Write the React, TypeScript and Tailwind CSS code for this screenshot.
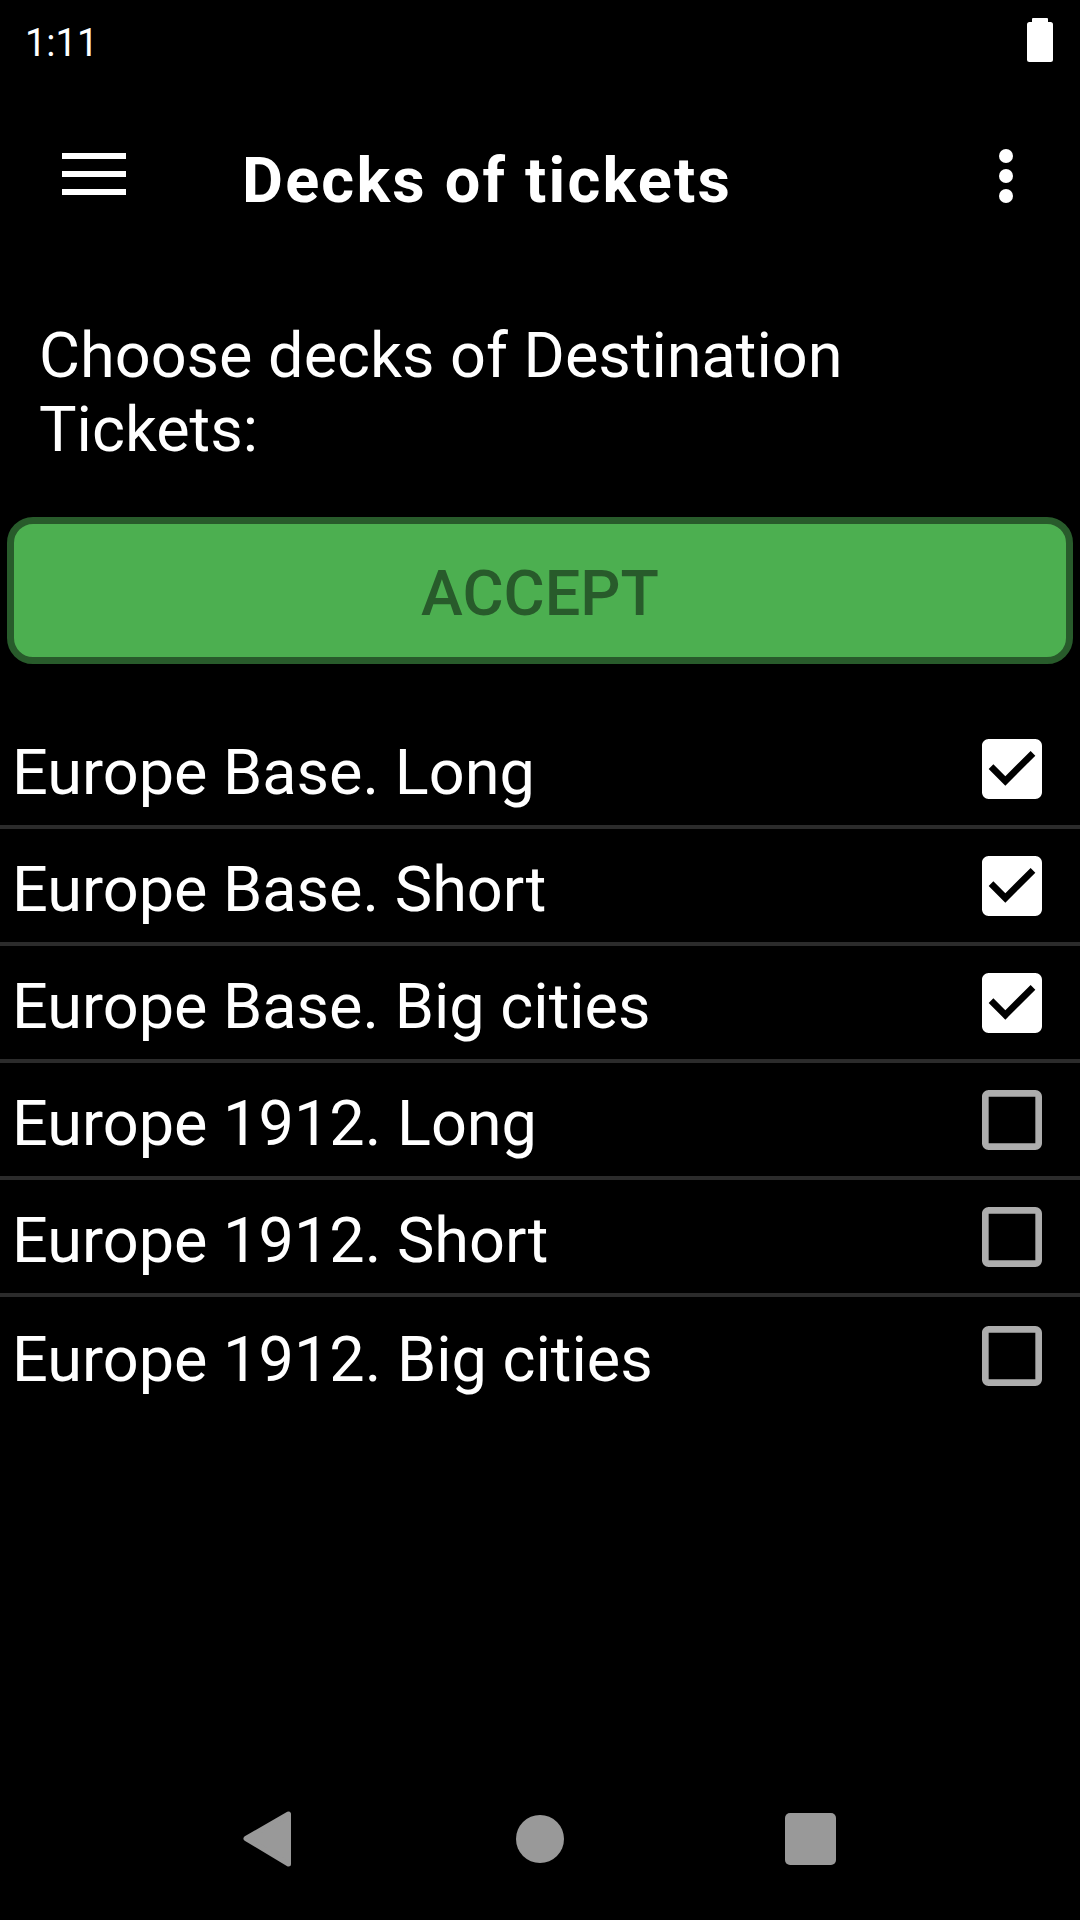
import React, { useState } from "react";

const decks = [
  { name: "Europe Base. Long", checked: true },
  { name: "Europe Base. Short", checked: true },
  { name: "Europe Base. Big cities", checked: true },
  { name: "Europe 1912. Long", checked: false },
  { name: "Europe 1912. Short", checked: false },
  { name: "Europe 1912. Big cities", checked: false },
];

function CheckIcon({ checked }: { checked: boolean }) {
  if (checked) {
    return (
      <svg width="80" height="80" viewBox="0 0 24 24">
        <path
          fill="#ffffff"
          d="M19 3H5c-1.11 0-2 .9-2 2v14c0 1.1.89 2 2 2h14c1.11 0 2-.9 2-2V5c0-1.1-.89-2-2-2zm-9 14l-5-5 1.41-1.41L10 14.17l7.59-7.59L19 8l-9 9z"
        />
      </svg>
    );
  }
  return (
    <svg width="80" height="80" viewBox="0 0 24 24">
      <path
        fill="#adadad"
        d="M19 5v14H5V5h14m0-2H5c-1.1 0-2 .9-2 2v14c0 1.1.9 2 2 2h14c1.1 0 2-.9 2-2V5c0-1.1-.9-2-2-2z"
      />
    </svg>
  );
}

export default function App() {
  const [selected, setSelected] = useState<boolean[]>(decks.map((d) => d.checked));

  const toggle = (i: number) => {
    setSelected(selected.map((v, idx) => (idx === i ? !v : v)));
  };

  return (
    <div className="w-[1080px] h-[1920px] bg-black text-white flex flex-col font-[Roboto,sans-serif] overflow-hidden">
      {/* Status bar */}
      <div className="h-[84px] flex justify-between items-start px-[25px]">
        <div className="mt-[21px] text-[38px] leading-[44px]">1:11</div>
        <svg className="mt-[18px] mr-[2px]" width="26" height="44" viewBox="0 0 26 44">
          <rect x="5" y="0" width="16" height="6" rx="1" fill="#ffffff" />
          <rect x="0" y="4" width="26" height="40" rx="2.5" fill="#ffffff" />
        </svg>
      </div>

      {/* Toolbar */}
      <div className="h-[235px] flex items-start">
        <svg className="mt-[69px] ml-[62px]" width="64" height="42" viewBox="0 0 64 42">
          <rect x="0" y="0" width="64" height="6" fill="#ffffff" />
          <rect x="0" y="18" width="64" height="6" fill="#ffffff" />
          <rect x="0" y="36" width="64" height="6" fill="#ffffff" />
        </svg>
        <h1 className="mt-[60px] ml-[116px] text-[63px] leading-[74px] font-bold tracking-[2.2px]">
          Decks of tickets
        </h1>
        <svg className="mt-[65px] ml-auto mr-[67px]" width="14" height="54" viewBox="0 0 14 54">
          <circle cx="7" cy="7" r="7" fill="#ffffff" />
          <circle cx="7" cy="27" r="7" fill="#ffffff" />
          <circle cx="7" cy="47" r="7" fill="#ffffff" />
        </svg>
      </div>

      {/* Main content */}
      <div className="flex-1 flex flex-col">
        <p className="px-[39px] text-[63px] leading-[74px]">
          Choose decks of Destination Tickets:
        </p>

        <button className="mt-[50px] mx-[7px] h-[147px] border-[7px] border-[#285b2b] rounded-[26px] bg-[#4caf50] text-[#285b2b] text-[63px] leading-[74px] font-medium pt-[6px]">
          ACCEPT
        </button>

        <div className="mt-[48px] flex flex-col">
          {decks.map((deck, i) => (
            <div
              key={deck.name}
              onClick={() => toggle(i)}
              className={`h-[117px] flex items-center justify-between pl-[12px] pr-[28px] ${
                i < decks.length - 1 ? "border-b-[4px] border-[#2b2b2b]" : ""
              }`}
            >
              <span className="text-[63px] leading-[74px] pt-[8px]">{deck.name}</span>
              <CheckIcon checked={selected[i]} />
            </div>
          ))}
        </div>
      </div>

      {/* Navigation bar */}
      <div className="h-[132px] flex items-center pt-[23px] pb-[53px] pl-[243px]">
        <svg width="48" height="56" viewBox="0 0 48 56">
          <path
            d="M3 27.5 L45.5 3 L45.5 53 Z"
            fill="#999999"
            stroke="#999999"
            strokeWidth="5"
            strokeLinejoin="round"
          />
        </svg>
        <div className="ml-[225px] w-[48px] h-[48px] rounded-full bg-[#999999]" />
        <div className="ml-[221px] w-[51px] h-[52px] rounded-[5px] bg-[#999999]" />
      </div>
    </div>
  );
}
